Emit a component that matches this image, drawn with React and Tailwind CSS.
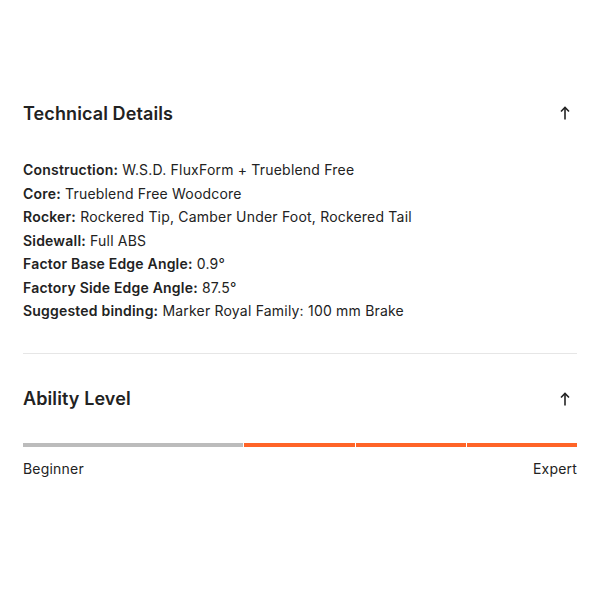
const specs = [
  ["Construction:", "W.S.D. FluxForm + Trueblend Free"],
  ["Core:", "Trueblend Free Woodcore"],
  ["Rocker:", "Rockered Tip, Camber Under Foot, Rockered Tail"],
  ["Sidewall:", "Full ABS"],
  ["Factor Base Edge Angle:", "0.9°"],
  ["Factory Side Edge Angle:", "87.5°"],
  ["Suggested binding:", "Marker Royal Family: 100 mm Brake"],
];

function ArrowUp() {
  return (
    <svg width="12" height="14" viewBox="0 0 12 14" fill="none" stroke="#222" strokeWidth="1.6">
      <path d="M6 1.5V13.5" />
      <path d="M2 5.5L6 1.5L10 5.5" />
    </svg>
  );
}

function SectionHeader({ title }) {
  return (
    <div className="flex h-[28px] items-center justify-between">
      <h2 className="text-[18px] font-semibold tracking-[0.1px] text-[#222]">{title}</h2>
      <span className="mr-[6px]">
        <ArrowUp />
      </span>
    </div>
  );
}

export default function App() {
  return (
    <div
      className="min-h-screen bg-white pl-[23px] pr-[28px] pt-[99px] text-[#222]"
      style={{ fontFamily: "Inter, 'Liberation Sans', sans-serif" }}
    >
      <section className="border-b border-[#e6e6e6] pb-[30px]">
        <SectionHeader title="Technical Details" />
        <ul className="mt-[31px] text-[14px] leading-[23.5px] tracking-[0.2px]">
          {specs.map(([label, value]) => (
            <li key={label}>
              <span className="font-semibold">{label}</span> {value}
            </li>
          ))}
        </ul>
      </section>

      <section className="pt-[31px]">
        <SectionHeader title="Ability Level" />
        <div className="mt-[30px] flex h-[4px] gap-px">
          <div className="grow-[2] basis-0 bg-[#bcbcbc]" />
          <div className="flex-1 bg-[#ff6428]" />
          <div className="flex-1 bg-[#ff6428]" />
          <div className="flex-1 bg-[#ff6428]" />
        </div>
        <div className="mt-[12px] flex justify-between text-[14px] leading-[20px] tracking-[0.2px]">
          <span>Beginner</span>
          <span>Expert</span>
        </div>
      </section>
    </div>
  );
}
